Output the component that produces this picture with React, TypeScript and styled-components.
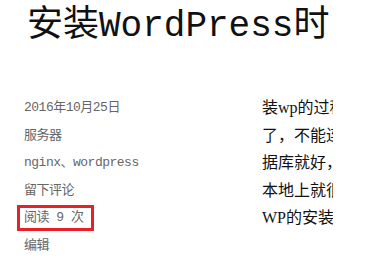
import React from 'react'
import styled, { createGlobalStyle } from 'styled-components'

const GlobalStyle = createGlobalStyle`
    html, body {
        margin: 0;
        padding: 0;
        background: #fff;
    }
`

const Page = styled.div`
    width: 389px;
    height: 259px;
    overflow: hidden;
    background: #fff;
`

const Title = styled.h1`
    margin: 0;
    padding-left: 27px;
    font-family: "Liberation Mono", "Noto Sans CJK SC", monospace;
    font-size: 36px;
    font-weight: normal;
    line-height: 53px;
    color: #111;
    white-space: nowrap;
`

const Body = styled.div`
    display: flex;
    padding-top: 41px;
`

const Meta = styled.ul`
    list-style: none;
    margin: 0;
    padding: 0 0 0 24px;
    width: 262px;
    box-sizing: border-box;
    font-family: "Liberation Mono", "Noto Sans CJK SC", monospace;
    font-size: 13px;
    letter-spacing: -0.5px;
    color: #666;
`

const MetaItem = styled.li`
    height: 27.5px;
    line-height: 27.5px;
    white-space: nowrap;
`

const Boxed = styled.span`
    display: inline-block;
    margin-left: -7px;
    padding: 0 4px;
    width: 63px;
    height: 20px;
    line-height: 20px;
    border: 3px solid #e8202a;
`

const Content = styled.div`
    width: 71px;
    overflow: hidden;
    font-family: "Liberation Serif", "Noto Sans CJK SC", serif;
    font-size: 16px;
    color: #111;
`

const Line = styled.p`
    margin: 0;
    height: 27.5px;
    line-height: 27.5px;
    white-space: nowrap;
`

const lines = [
    '装wp的过程中遇到',
    '了，不能连接数据',
    '据库就好，然后',
    '本地上就很快',
    'WP的安装过程',
]

const App: React.FC = () => {
    return (
        <Page>
            <GlobalStyle />
            <Title>安装WordPress时</Title>
            <Body>
                <Meta>
                    <MetaItem>2016年10月25日</MetaItem>
                    <MetaItem>服务器</MetaItem>
                    <MetaItem>nginx、wordpress</MetaItem>
                    <MetaItem>留下评论</MetaItem>
                    <MetaItem>
                        <Boxed>阅读 9 次</Boxed>
                    </MetaItem>
                    <MetaItem>编辑</MetaItem>
                </Meta>
                <Content>
                    {lines.map((l) => (
                        <Line key={l}>{l}</Line>
                    ))}
                </Content>
            </Body>
        </Page>
    )
}

export default App
